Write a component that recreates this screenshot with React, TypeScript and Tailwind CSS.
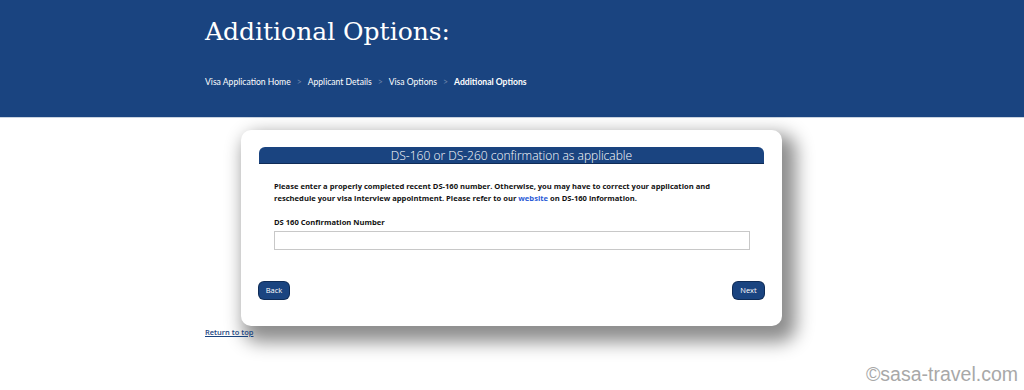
export default function App() {
  return (
    <div className="relative h-[390px] w-[1024px] overflow-hidden bg-white font-['Open_Sans',sans-serif]">
      <header className="h-[118px] border-b border-[#c9d3e0] bg-[#1a4480]">
        <div className="pl-[205px] pt-[13px]">
          <h1 className="font-['DejaVu_Serif',serif] text-[25px] leading-[38px] text-white">
            Additional Options:
          </h1>
          <nav className="mt-[25px] flex items-center gap-[6px] font-['Lato',sans-serif] text-[8.6px] text-white">
            <span>Visa Application Home</span>
            <span className="text-[#6f86ab]">&gt;</span>
            <span>Applicant Details</span>
            <span className="text-[#6f86ab]">&gt;</span>
            <span>Visa Options</span>
            <span className="text-[#6f86ab]">&gt;</span>
            <span className="font-bold">Additional Options</span>
          </nav>
        </div>
      </header>

      <main className="pl-[241px] pt-[12px]">
        <div className="w-[541px] rounded-[10px] bg-white px-[18px] pb-[27px] pt-[17px] shadow-[8px_10px_18px_6px_rgba(0,0,0,0.45)]">
          <div className="h-[17px] rounded-t-[6px] border-b border-[#0f2c57] bg-[#1a4480] text-center text-[12px] font-light leading-[17px] text-white">
            DS-160 or DS-260 confirmation as applicable
          </div>
          <div className="px-[15px] pt-[16px]">
            <p className="text-[7.6px] font-bold leading-[12px] text-[#111]">
              Please enter a properly completed recent DS-160 number. Otherwise, you may have to correct your application and
              <br />
              reschedule your visa interview appointment. Please refer to our{" "}
              <a className="text-[#2a5bd7]">website</a> on DS-160 information.
            </p>
            <label className="mt-[12px] block text-[7.6px] font-bold leading-[12px] text-[#111]">
              DS 160 Confirmation Number
            </label>
            <input
              type="text"
              className="mt-[3px] block h-[19px] w-[476px] border border-[#c8c8c8] bg-white"
            />
          </div>
          <div className="mt-[32px] flex items-center justify-between">
            <button className="h-[17px] w-[30px] rounded-[5px] bg-[#1a4480] text-[7.5px] text-white shadow-[0_0_0_1px_#0f2c57]">
              Back
            </button>
            <button className="h-[17px] w-[31px] rounded-[5px] bg-[#1a4480] text-[7.5px] text-white shadow-[0_0_0_1px_#0f2c57]">
              Next
            </button>
          </div>
        </div>
      </main>

      <a className="ml-[205px] mt-[1px] block w-fit text-[7.5px] font-semibold text-[#1a4480] underline">
        Return to top
      </a>

      <div className="absolute bottom-[1px] right-[6px] font-['Liberation_Sans',sans-serif] text-[19.5px] text-[#a8a8a8]">
        ©sasa-travel.com
      </div>
    </div>
  );
}
